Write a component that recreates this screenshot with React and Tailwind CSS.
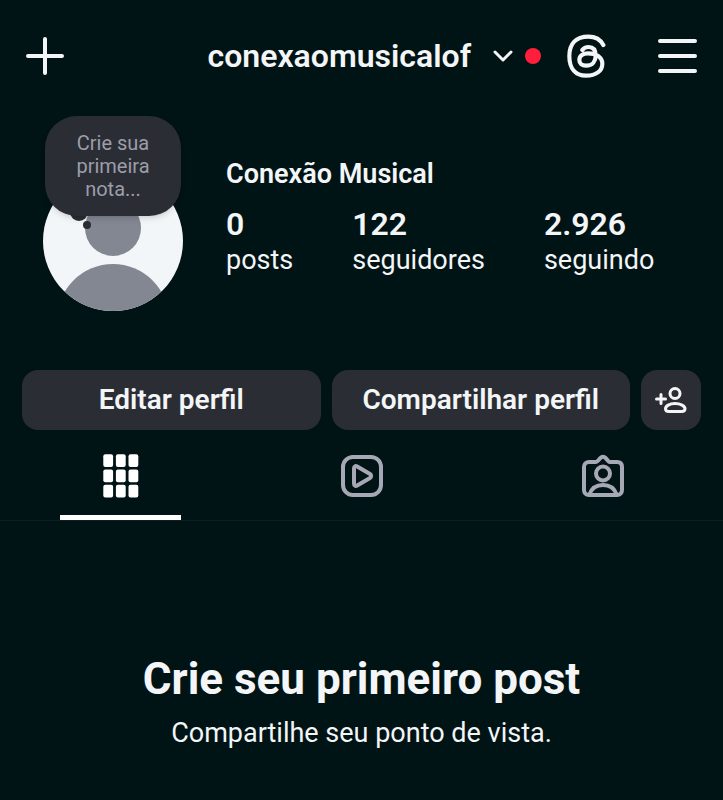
import React, { useState } from 'react';

const stats = [
  { value: '0', label: 'posts' },
  { value: '122', label: 'seguidores' },
  { value: '2.926', label: 'seguindo' },
];

function PlusIcon() {
  return (
    <svg width="38" height="38" viewBox="0 0 38 38" fill="none" stroke="currentColor" strokeWidth="4" strokeLinecap="round">
      <path d="M19 2v34M2 19h34" />
    </svg>
  );
}

function ChevronIcon() {
  return (
    <svg width="20" height="12" viewBox="0 0 20 12" fill="none" stroke="currentColor" strokeWidth="3" strokeLinecap="round" strokeLinejoin="round">
      <path d="M2 2l8 8 8-8" />
    </svg>
  );
}

function ThreadsIcon() {
  return (
    <svg width="39" height="44" viewBox="261 41 117 132" fill="none" stroke="currentColor" strokeWidth="12.500" strokeLinecap="round">
      <path d="M370 74C361 57 346 49 325 49C288 49 268 70 268 107C268 145 287 166 318 166C348 166 367 152 367 130C367 110 348 99 324 99C308 99 298 107 298 119C298 129 306 136 318 136C338 136 347 122 347 106C347 90 340 80 326 80C317 80 311 83 307 89" />
    </svg>
  );
}

function MenuIcon() {
  return (
    <svg width="39" height="36" viewBox="0 0 39 36" fill="none" stroke="currentColor" strokeWidth="4" strokeLinecap="round">
      <path d="M2 3h35M2 18h35M2 33h35" />
    </svg>
  );
}

function AddPersonIcon() {
  return (
    <svg width="32" height="28" viewBox="0 0 32 28" fill="none" stroke="currentColor" strokeWidth="3" strokeLinecap="round">
      <path d="M1.5 13h9M6 8.500v9" />
      <circle cx="20" cy="7.500" r="5" />
      <path d="M20 17.500c-5.500 0-9.500 2.600-9.500 5.300 0 1.800 1.300 2.700 3.500 2.700h12.500c2.200 0 3.500-.9 3.500-2.700 0-2.700-4.500-5.300-10-5.300z" />
    </svg>
  );
}

function GridIcon() {
  return (
    <svg width="36" height="44" viewBox="0 0 36 44" fill="currentColor">
      {[0, 15.2, 30.4].map((y) =>
        [0, 12.6, 25.2].map((x) => <rect key={`${x}-${y}`} x={x + 0.3} y={y + 0.3} width="9.800" height="12.800" rx="2" />)
      )}
    </svg>
  );
}

function ReelsIcon() {
  return (
    <svg width="44" height="44" viewBox="0 0 44 44" fill="none" stroke="currentColor" strokeWidth="4" strokeLinejoin="round">
      <rect x="3" y="3" width="38" height="38" rx="10" />
      <path d="M14 14.500v15c0 2 1.500 3 3.200 2L30 24c1.500-1 1.500-3 0-4L17.200 12.500c-1.700-1-3.200 0-3.200 2z" />
    </svg>
  );
}

function TaggedIcon() {
  return (
    <svg width="44" height="44" viewBox="0 0 44 44" fill="none" stroke="currentColor" strokeWidth="4" strokeLinejoin="round">
      <path d="M8 8h6.500c1 0 1.700-.4 2.400-1.200l2.600-2.900c1.500-1.700 3.500-1.700 5 0l2.600 2.900c.7.8 1.400 1.200 2.400 1.200H36c3.500 0 5 2 5 5v23c0 3-2 5-5 5H8c-3 0-5-2-5-5V13c0-3 2-5 5-5z" />
      <circle cx="22" cy="19.500" r="7" />
      <path d="M8.500 40.500c2-6 7-9.500 13.500-9.500s11.500 3.500 13.500 9.500" />
    </svg>
  );
}

const tabs = [
  { id: 'grid', label: 'Posts', Icon: GridIcon },
  { id: 'reels', label: 'Reels', Icon: ReelsIcon },
  { id: 'tagged', label: 'Marcados', Icon: TaggedIcon },
];

export default function App() {
  const [activeTab, setActiveTab] = useState('grid');

  return (
    <div className="min-h-screen bg-[#001315] text-[#f3f5f7] font-[Roboto,sans-serif]">
      {/* HEADER */}
      <header className="flex h-28 items-center px-[26px]">
        <button aria-label="Criar"><PlusIcon /></button>
        <button className="ml-auto flex items-center">
          <span className="text-[32px] leading-9 font-semibold">conexaomusicalof</span>
          <span className="ml-[22px]"><ChevronIcon /></span>
          <span className="ml-3 size-4 rounded-full bg-[#ff1f3d]" />
        </button>
        <button aria-label="Threads" className="ml-[26px]"><ThreadsIcon /></button>
        <button aria-label="Menu" className="ml-[52px]"><MenuIcon /></button>
      </header>

      <main>
        {/* PROFILE */}
        <section className="flex items-start pl-[43px] pr-6 pt-1">
          <div className="relative shrink-0 pt-[55px]">
            <svg className="size-[140px] rounded-full" viewBox="0 0 140 140">
              <rect width="140" height="140" fill="#f3f6f9" />
              <circle cx="70" cy="57" r="28" fill="#828792" />
              <circle cx="70" cy="149" r="56" fill="#828792" />
              <circle cx="36" cy="41" r="9" fill="#2b2d35" />
              <circle cx="44" cy="54" r="4" fill="#2b2d35" />
            </svg>
            <button className="absolute top-0 left-[2px] flex h-[100px] w-[136px] items-center justify-center rounded-[32px] bg-[#2b2d35] px-6 text-center text-xl leading-[23px] text-[#9c9ea9] shadow-md">
              Crie sua primeira nota...
            </button>
          </div>
          <div className="ml-[43px] pt-10">
            <h1 className="text-[27px] leading-9 font-semibold">Conexão Musical</h1>
            <div className="mt-[14px] flex gap-[59px]">
              {stats.map((s) => (
                <a key={s.label} href={`#${s.label}`} className="block">
                  <span className="block text-[32px] leading-9 font-semibold">{s.value}</span>
                  <span className="block text-[27px] leading-9">{s.label}</span>
                </a>
              ))}
            </div>
          </div>
        </section>

        {/* ACTIONS */}
        <div className="mt-[59px] flex gap-[11px] px-[22px] text-[28px] font-semibold">
          <button className="h-[60px] flex-1 rounded-2xl bg-[#2b2d35]">Editar perfil</button>
          <button className="h-[60px] flex-1 rounded-2xl bg-[#2b2d35]">Compartilhar perfil</button>
          <button aria-label="Encontrar pessoas" className="flex size-[60px] items-center justify-center rounded-2xl bg-[#2b2d35]">
            <AddPersonIcon />
          </button>
        </div>

        {/* TABS */}
        <div role="tablist" className="flex border-b border-[#0b2023]">
          {tabs.map(({ id, label, Icon }) => (
            <button
              key={id}
              role="tab"
              aria-label={label}
              aria-selected={activeTab === id}
              onClick={() => setActiveTab(id)}
              className={`flex h-[90px] flex-1 flex-col items-center justify-between pt-6 ${activeTab === id ? 'text-white' : 'text-[#a6a9b5]'}`}
            >
              <Icon />
              <span className={`h-[5px] w-1/2 ${activeTab === id ? 'bg-white' : ''}`} />
            </button>
          ))}
        </div>

        {/* EMPTY STATE */}
        <section className="px-6 pt-[132px] text-center">
          <h2 className="text-[44px] leading-[52px] font-bold">Crie seu primeiro post</h2>
          <p className="mt-[10px] text-[27px] leading-9">Compartilhe seu ponto de vista.</p>
        </section>
      </main>
    </div>
  );
}
